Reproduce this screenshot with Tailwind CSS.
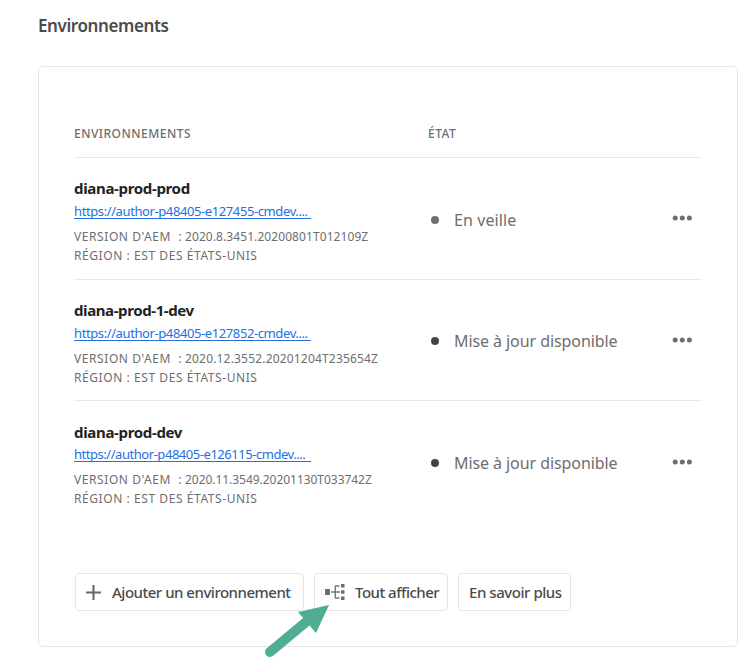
<!DOCTYPE html>
<html lang="fr">
<head>
<meta charset="utf-8">
<title>Environnements</title>
<script src="https://cdn.jsdelivr.net/npm/@tailwindcss/browser@4"></script>
</head>
<body class="w-[749px] h-[658px] overflow-hidden bg-white font-['Noto_Sans',sans-serif] text-[#6e6e6e] relative">
<h1 class="pl-[38px] pt-[14px] h-[66px] text-[17px] leading-6 font-semibold text-[#4b4b4b] whitespace-nowrap"><span class="tracking-[-0.4px]">Environnements</span></h1>
<main class="ml-[38px] w-[700px] h-[581px] border border-[#e6e6e6] rounded-[5px] px-[35px] pt-[57px]">
  <div class="flex h-[34px] border-b border-[#e8e8e8] text-[12px] leading-5 font-medium whitespace-nowrap">
    <div class="w-[354px]"><span class="tracking-[0.48px]">ENVIRONNEMENTS</span></div>
    <div><span class="tracking-[0.5px]">ÉTAT</span></div>
  </div>
  <section class="flex h-[122px] border-b border-[#e8e8e8] whitespace-nowrap">
    <div class="w-[354px] pt-[19px]">
      <div class="mb-px text-[15px] leading-[22px] font-bold text-[#222]"><span class="tracking-[-0.33px]">diana-prod-prod</span></div>
      <div class="text-[13px] leading-[22px] text-[#2470e0]"><a class="inline-block w-[237px] h-[19px] leading-[22px] border-b border-[#2470e0] align-top tracking-[-0.4px]">https://author-p48405-e127455-cmdev....</a></div>
      <div class="mt-[5px] text-[12px] leading-[19px]"><div class="flex"><span class="w-[111px] tracking-[0.58px]">VERSION D'AEM &nbsp;:</span><span class="tracking-[0.08px]">2020.8.3451.20200801T012109Z</span></div><span class="block tracking-[0.57px]">RÉGION : EST DES ÉTATS-UNIS</span></div>
    </div>
    <div class="flex w-[245px] h-[123px] items-center"><i class="ml-[3px] mr-[15px] size-2 rounded-full bg-[#707070]"></i><span class="text-[16px] tracking-[0.1px]">En veille</span></div>
    <svg class="mt-[57px] -ml-px w-5 h-[6px]" viewBox="0 0 20 6" fill="#6e6e6e"><circle cx="3.2" cy="3" r="2.5"/><circle cx="10.3" cy="3" r="2.5"/><circle cx="17.4" cy="3" r="2.5"/></svg>
  </section>
  <section class="flex h-[121px] border-b border-[#e8e8e8] whitespace-nowrap">
    <div class="w-[354px] pt-[19px]">
      <div class="mb-px text-[15px] leading-[22px] font-bold text-[#222]"><span class="tracking-[-0.4px]">diana-prod-1-dev</span></div>
      <div class="text-[13px] leading-[22px] text-[#2470e0]"><a class="inline-block w-[237px] h-[19px] leading-[22px] border-b border-[#2470e0] align-top tracking-[-0.4px]">https://author-p48405-e127852-cmdev....</a></div>
      <div class="mt-[5px] text-[12px] leading-[19px]"><div class="flex"><span class="w-[111px] tracking-[0.58px]">VERSION D'AEM &nbsp;:</span><span class="tracking-[0.18px]">2020.12.3552.20201204T235654Z</span></div><span class="block tracking-[0.57px]">RÉGION : EST DES ÉTATS-UNIS</span></div>
    </div>
    <div class="flex w-[245px] h-[122px] items-center"><i class="ml-[3px] mr-[15px] size-2 rounded-full bg-[#444]"></i><span class="text-[16px] tracking-[-0.08px]">Mise à jour disponible</span></div>
    <svg class="mt-[57px] -ml-px w-5 h-[6px]" viewBox="0 0 20 6" fill="#6e6e6e"><circle cx="3.2" cy="3" r="2.5"/><circle cx="10.3" cy="3" r="2.5"/><circle cx="17.4" cy="3" r="2.5"/></svg>
  </section>
  <section class="flex h-[172px] whitespace-nowrap">
    <div class="w-[354px] pt-5">
      <div class="text-[15px] leading-[22px] font-bold text-[#222]"><span class="tracking-[-0.33px]">diana-prod-dev</span></div>
      <div class="text-[13px] leading-[22px] text-[#2470e0]"><a class="inline-block w-[237px] h-[19px] leading-[22px] border-b border-[#2470e0] align-top tracking-[-0.46px]">https://author-p48405-e126115-cmdev....</a></div>
      <div class="mt-[5px] text-[12px] leading-[19px]"><div class="flex"><span class="w-[111px] tracking-[0.58px]">VERSION D'AEM &nbsp;:</span><span class="tracking-[-0.04px]">2020.11.3549.20201130T033742Z</span></div><span class="block tracking-[0.57px]">RÉGION : EST DES ÉTATS-UNIS</span></div>
    </div>
    <div class="flex w-[245px] h-[124px] items-center"><i class="ml-[3px] mr-[15px] size-2 rounded-full bg-[#444]"></i><span class="text-[16px] tracking-[-0.08px]">Mise à jour disponible</span></div>
    <svg class="mt-[58px] -ml-px w-5 h-[6px]" viewBox="0 0 20 6" fill="#6e6e6e"><circle cx="3.2" cy="3" r="2.5"/><circle cx="10.3" cy="3" r="2.5"/><circle cx="17.4" cy="3" r="2.5"/></svg>
  </section>
  <div class="flex pl-px gap-[10px] text-[15px] font-medium text-[#4b4b4b] whitespace-nowrap">
    <button class="flex items-center w-[229px] h-[38px] border border-[#e6e6e6] rounded-[4px] pl-[10px]">
      <svg class="w-[15px] h-[15px] mr-[11px]" viewBox="0 0 15 15" stroke="#666" stroke-width="2"><path d="M0 7.5H15M7.5 0V15"/></svg><span class="tracking-[-0.49px]">Ajouter un environnement</span>
    </button>
    <button class="flex items-center w-[134px] h-[38px] border border-[#e6e6e6] rounded-[4px] pl-[10px]">
      <svg class="w-5 h-4 mr-[10px]" viewBox="0 0 20 16" fill="#6e6e6e"><path d="M0 5H5V11H0zM16 0H19.5V3.5H16zM16 6.3H19.5V9.7H16zM16 12.5H19.5V16H16z"/><path d="M6 8H15M14.5 2H10.3V14H14.5" fill="none" stroke="#777" stroke-width="1.4"/></svg><span class="tracking-[-0.5px]">Tout afficher</span>
    </button>
    <button class="flex items-center w-[113px] h-[38px] border border-[#e6e6e6] rounded-[4px] pl-[10px]"><span class="tracking-[-0.45px]">En savoir plus</span></button>
  </div>
</main>
<svg class="absolute left-[260px] top-[600px] w-[75px] h-[58px]" viewBox="0 0 75 58"><path d="M10 52L46 22" stroke="#4fad91" stroke-width="10" stroke-linecap="round"/><path d="M69 5L38 12L56 33Z" fill="#4fad91"/></svg>
</body>
</html>
